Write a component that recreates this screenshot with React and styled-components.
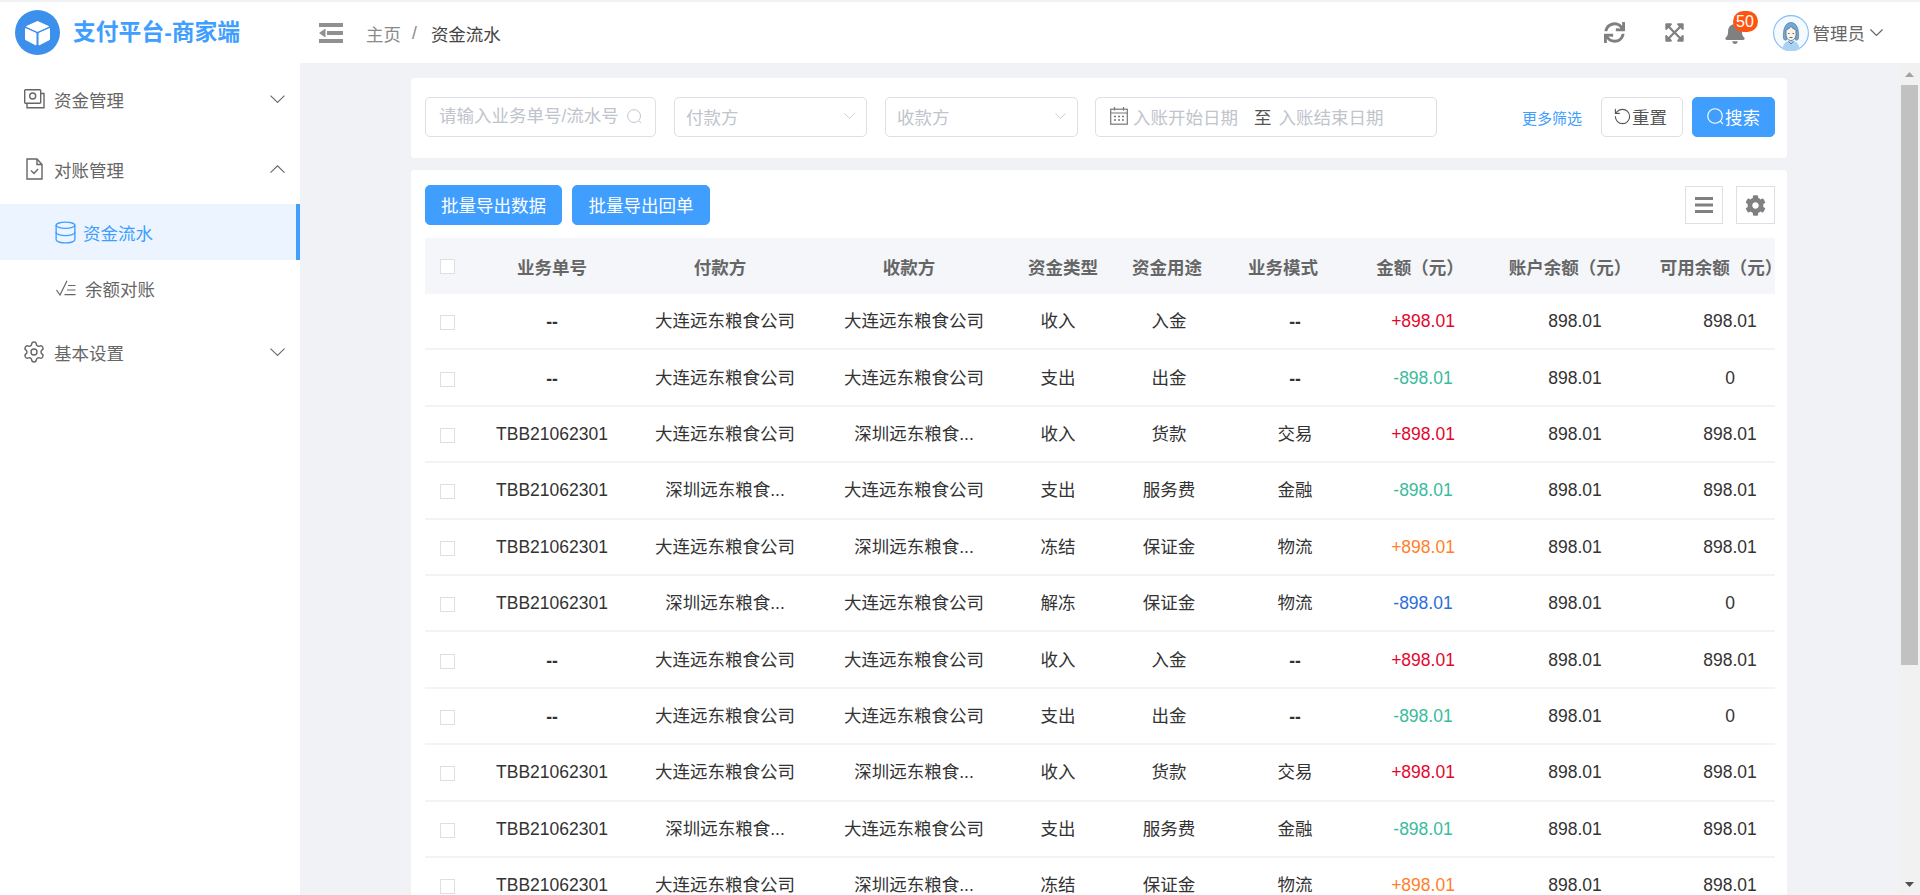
import React from 'react';
import styled, { createGlobalStyle } from 'styled-components';
import { FaSync, FaExpandArrowsAlt, FaBell, FaCog } from 'react-icons/fa';
import { Database, Settings, RotateCcw } from 'lucide-react';

const Global = createGlobalStyle`
  html, body { margin: 0; height: 100%; overflow: hidden; }
  body { font-family: "Liberation Sans", "Noto Sans CJK SC", sans-serif; font-size: 17.5px; color: #333; }
  * { box-sizing: border-box; }
`;

const Shell = styled.div`
  height: 100vh; padding-top: 2px; background: #f0f2f5;
  display: flex; flex-direction: column;
`;
const Header = styled.header`
  height: 61px; flex: none; background: #fff; display: flex; align-items: center;
`;
const Brand = styled.div`
  width: 300px; flex: none; display: flex; align-items: center; padding-left: 15px; gap: 13px;
`;
const BrandName = styled.div`
  font-size: 22.8px; font-weight: 700; color: #409eff; white-space: nowrap; margin-top: -4px;
`;
const Toggle = styled.div`
  margin-left: 19px; width: 24px; height: 20px; display: flex; color: #909090;
`;
const Crumbs = styled.nav`
  margin-left: 23px; display: flex; align-items: center; margin-top: 2px; white-space: nowrap;
`;
const CrumbLink = styled.span`color: #8a8a8a;`;
const CrumbSep = styled.span`color: #8a8a8a; margin: 0 14px 0 11px;`;
const CrumbNow = styled.span`color: #444;`;
const Tools = styled.div`
  margin-left: auto; display: flex; align-items: center; padding-right: 37px; color: #808080;
`;
const ToolIcon = styled.div`
  display: flex; margin-right: ${p => p.$gap}px; position: relative;
`;
const Badge = styled.span`
  position: absolute; left: 9px; top: -11px; height: 21px; min-width: 25px; border-radius: 11px;
  background: #ff5310; color: #fff; font-size: 16px; line-height: 21px; text-align: center;
`;
const AdminName = styled.span`color: #666; margin: 0 5px 0 4px;`;
const AdminCaret = styled.span`display: flex; color: #666;`;

const Body = styled.div`flex: 1; min-height: 0; display: flex;`;
const Sidebar = styled.aside`
  width: 300px; flex: none; background: #fff; padding-top: 1px;
`;
const MenuItem = styled.div`
  height: 70px; display: flex; align-items: center; padding-left: 24px; color: #666;
`;
const MenuIcon = styled.span`
  width: 30px; flex: none; display: flex; color: #666; transform: translateX(${p => p.$shift || 0}px);
`;
const MenuChevron = styled.span`margin-left: auto; margin-right: 15px; display: flex; color: #666;`;
const SubMenu = styled.div`margin-bottom: 1px;`;
const SubItem = styled.div`
  height: 56px; display: flex; align-items: center; padding-left: 56px;
  color: ${p => (p.$active ? '#409eff' : '#666')};
  background: ${p => (p.$active ? '#ecf5ff' : 'transparent')};
  border-right: 4px solid ${p => (p.$active ? '#409eff' : 'transparent')};
`;
const SubIcon = styled.span`
  width: ${p => p.$w}px; margin-left: ${p => p.$shift || 0}px; flex: none; display: flex;
`;

const Main = styled.main`
  flex: 1; min-width: 0; overflow: hidden; padding: 15px 0 0;
`;
const Rail = styled.div`
  width: 21px; flex: none; background: #f1f1f1; display: flex; flex-direction: column;
`;
const RailEnd = styled.div`
  height: 22px; flex: none; display: flex; align-items: center; justify-content: center;
  color: ${p => p.$c}; margin-top: ${p => (p.$bottom ? 'auto' : '0')};
`;
const Thumb = styled.div`
  height: 580px; margin: 0 2px; background: #c1c1c1;
`;
const Column = styled.div`
  width: 1376px; margin-left: 111px; display: flex; flex-direction: column; gap: 12px;
`;
const Card = styled.section`
  background: #fff; border-radius: 4px; padding: ${p => p.$pad};
`;
const FilterBar = styled.div`display: flex; align-items: center;`;
const Field = styled.div`
  height: 40px; width: ${p => p.$w}px; margin-right: ${p => p.$mr}px; flex: none;
  border: 1px solid #dcdfe6; border-radius: 5px; display: flex; align-items: center;
  padding: ${p => p.$pad || '0 11px 2px 11px'}; color: #c0c4cc; white-space: nowrap;
`;
const TextInput = styled.input`
  flex: 1; min-width: 0; border: 0; outline: 0; padding: 0; font: inherit; background: transparent; color: #333;
  &::placeholder { color: #c0c4cc; opacity: 1; }
`;
const FieldEnd = styled.span`margin-left: auto; display: flex; color: #c0c4cc;`;
const RangeSep = styled.span`color: #555; margin: 0 7px 0 16px;`;
const CalIcon = styled.span`display: flex; margin-right: 5px; color: #777;`;
const MoreLink = styled.a`
  margin-left: auto; margin-right: 19px; font-size: 15px; color: #409eff; white-space: nowrap;
`;
const Btn = styled.button`
  height: 40px; width: ${p => p.$w}px; flex: none; border-radius: 5px; font: inherit; cursor: pointer;
  padding: 0 ${p => p.$pr || 0}px 2px 0; margin-left: ${p => p.$ml || 0}px;
  display: flex; align-items: center; justify-content: center; gap: ${p => p.$gap || 0}px;
  white-space: nowrap;
  color: ${p => (p.$primary ? '#fff' : '#555')};
  background: ${p => (p.$primary ? '#409eff' : '#fff')};
  border: 1px solid ${p => (p.$primary ? '#409eff' : '#dcdfe6')};
`;
const ActionBar = styled.div`display: flex; align-items: center; gap: 10px; margin-bottom: 13px;`;
const Spacer = styled.div`flex: 1;`;
const SquareBtn = styled.button`
  width: ${p => p.$w}px; height: 38px; padding: 0; background: #fff; border: 1px solid #dcdfe6; color: #808080;
  display: flex; align-items: center; justify-content: center; margin-left: ${p => p.$ml || 0}px;
`;
const HeadRow = styled.div`
  display: grid; height: 56px; background: #f4f6fa; align-items: center;
  grid-template-columns: 44px 166px 170px 208px 100px 108px 124px 150px 150px 152px;
  font-weight: 700; color: #666; text-align: center; white-space: nowrap;
`;
const Row = styled.div`
  display: grid; height: 56.4px; align-items: center; line-height: 18px;
  grid-template-columns: 44px 166px 180px 198px 90px 132px 120px 136px 168px 142px;
  text-align: center; white-space: nowrap; border-bottom: 2px solid #f2f3f6;
`;
const Check = styled.span`
  display: block; width: 15px; height: 15px; margin: ${p => (p.$body ? '3px' : '0')} 0 0 15px;
  border: 1px solid #dcdfe6; background: #fff;
`;
const Dash = styled.span`font-weight: 700; position: relative; top: 1px;`;
const Amount = styled.span`color: ${p => p.$c};`;

const Chevron = ({ up, w = 15, sw = 1.1 }) => (
  <svg width={w} height={w * 0.55} viewBox="0 0 15 8" fill="none" stroke="currentColor" strokeWidth={sw}>
    <path d={up ? 'M.5 7.5 7.5 .7l7 6.8' : 'M.5 .5l7 6.8 7-6.8'} />
  </svg>
);
const LogoMark = () => (
  <svg width="45" height="45" viewBox="0 0 45 45">
    <circle cx="22.5" cy="22.5" r="22.5" fill="#3c8fea" />
    <path d="M22.5 11.5 33.5 16.4 22.5 21.4 11.5 16.4Z" fill="#fff" stroke="#fff" strokeLinejoin="round" strokeWidth="1" />
    <path d="M10.5 18.6 21 23.3V35L10.5 29.6Z" fill="#fff" stroke="#fff" strokeLinejoin="round" strokeWidth="1" />
    <path d="M34.5 18.6 24 23.3V35L34.5 29.6Z" fill="#fff" stroke="#fff" strokeLinejoin="round" strokeWidth="1" />
  </svg>
);
const ToggleGlyph = () => (
  <svg width="24" height="20" viewBox="0 0 24 20" fill="currentColor">
    <rect width="24" height="4" />
    <rect x="8" y="8" width="16" height="4" />
    <path d="M0 10 6.500 5.500v9Z" />
    <rect y="16" width="24" height="4" />
  </svg>
);
const AvatarGlyph = () => (
  <svg width="36" height="36" viewBox="0 0 36 36">
    <circle cx="18" cy="18" r="17.4" fill="#f5fafe" stroke="#82bff7" strokeWidth="1.1" />
    <path d="M9.5 34c.6-6 4-8.6 8.5-8.6s7.900 2.600 8.500 8.600a17 17 0 0 1-17 0Z" fill="#a9d3f5" />
    <path d="M10.500 23c-.7-8 1.500-15.500 7.500-15.500S26.200 15 25.500 23c-.2 2.500-3 3-3.500 1V15h-8v9c-.5 2-3.300 1.500-3.500-1Z" fill="#6fa9d8" stroke="#4c6f8c" strokeWidth=".6" />
    <path d="M13 15c2-1 4-2 5-3.500 1 1.500 3 2.500 5 3.500v4.500c0 3.500-2.500 6-5 6s-5-2.500-5-6Z" fill="#f7f4f0" stroke="#555" strokeWidth=".7" />
    <path d="M15 18.500h1.500M19.500 18.500H21M16.500 22.500h3" stroke="#444" strokeWidth=".8" />
    <path d="M15.500 26.500 18 29l2.500-2.500" fill="none" stroke="#555" strokeWidth=".7" />
  </svg>
);
const FundsGlyph = () => (
  <svg width="21" height="20" viewBox="0 0 21 20" fill="none" stroke="currentColor" strokeWidth="1.4">
    <rect x=".7" y=".7" width="16" height="13.500" rx="1" />
    <circle cx="8.700" cy="7" r="3" />
    <path d="M3 14.500v4.300h17V4.500h-3" />
  </svg>
);
const DocGlyph = () => (
  <svg width="17" height="22" viewBox="0 0 17 22" fill="none" stroke="currentColor" strokeWidth="1.4">
    <path d="M1 1h10l5 5.500V21H1Z" />
    <path d="M11 1v5.500h5" />
    <path d="M5 12.500l3 3 4-4.500" />
  </svg>
);
const CheckListGlyph = () => (
  <svg width="20" height="16" viewBox="0 0 20 16" fill="none" stroke="currentColor" strokeWidth="1.2">
    <path d="M.5 10l3.500 5L11 .7" />
    <path d="M12 5.500h7.500M11 10h8.500M8.500 14.700h11" />
  </svg>
);
const CalendarGlyph = () => (
  <svg width="18" height="18" viewBox="0 0 18 18" fill="none" stroke="currentColor" strokeWidth="1.2">
    <rect x=".7" y="2.200" width="16.600" height="15" />
    <path d="M.7 6h16.600M4.500 0v3.500M13.500 0v3.500" />
    <path d="M4 9.500h2M8 9.500h2M12 9.500h2M4 13h2M8 13h2M12 13h2" strokeWidth="1.400" />
  </svg>
);
const BarsGlyph = () => (
  <svg width="18" height="16" viewBox="0 0 18 16" fill="currentColor">
    <rect width="18" height="3" />
    <rect y="6.500" width="18" height="3" />
    <rect y="13" width="18" height="3" />
  </svg>
);
const Lens = ({ size = 18, sw = 1.2 }) => (
  <svg width={size} height={size} viewBox="0 0 18 18" fill="none" stroke="currentColor" strokeWidth={sw}>
    <circle cx="8.500" cy="8.500" r="7.700" />
    <path d="M14 14l3 3" />
  </svg>
);
const RailArrow = ({ down }) => (
  <svg width="9" height="5" viewBox="0 0 9 5" fill="currentColor">
    <path d={down ? 'M0 0h9L4.500 5Z' : 'M0 5h9L4.500 0Z'} />
  </svg>
);

const RED = '#e4062e', GREEN = '#3abb9e', ORANGE = '#ff7f2a', BLUE = '#2a6edc';
const DL = '大连远东粮食公司', SZ = '深圳远东粮食...', TBB = 'TBB21062301';
const base = [
  ['--', DL, DL, '收入', '入金', '--', '+898.01', RED, '898.01'],
  ['--', DL, DL, '支出', '出金', '--', '-898.01', GREEN, '0'],
  [TBB, DL, SZ, '收入', '货款', '交易', '+898.01', RED, '898.01'],
  [TBB, SZ, DL, '支出', '服务费', '金融', '-898.01', GREEN, '898.01'],
  [TBB, DL, SZ, '冻结', '保证金', '物流', '+898.01', ORANGE, '898.01'],
  [TBB, SZ, DL, '解冻', '保证金', '物流', '-898.01', BLUE, '0'],
];
const rows = Array.from({ length: 11 }, (_, i) => base[i % 6]);
const heads = ['业务单号', '付款方', '收款方', '资金类型', '资金用途', '业务模式', '金额（元）', '账户余额（元）', '可用余额（元）'];
const cell = v => (v === '--' ? <Dash>--</Dash> : v);

export default function App() {
  return (
    <Shell>
      <Global />
      <Header>
        <Brand>
          <LogoMark />
          <BrandName>支付平台-商家端</BrandName>
        </Brand>
        <Toggle><ToggleGlyph /></Toggle>
        <Crumbs>
          <CrumbLink>主页</CrumbLink>
          <CrumbSep>/</CrumbSep>
          <CrumbNow>资金流水</CrumbNow>
        </Crumbs>
        <Tools>
          <ToolIcon $gap={39}><FaSync size={21} /></ToolIcon>
          <ToolIcon $gap={39}><FaExpandArrowsAlt size={21} /></ToolIcon>
          <ToolIcon $gap={27}><FaBell size={22} /><Badge>50</Badge></ToolIcon>
          <AvatarGlyph />
          <AdminName>管理员</AdminName>
          <AdminCaret><Chevron w={13} sw={1.4} /></AdminCaret>
        </Tools>
      </Header>
      <Body>
        <Sidebar>
          <MenuItem>
            <MenuIcon><FundsGlyph /></MenuIcon>资金管理
            <MenuChevron><Chevron /></MenuChevron>
          </MenuItem>
          <MenuItem>
            <MenuIcon $shift={2}><DocGlyph /></MenuIcon>对账管理
            <MenuChevron><Chevron up /></MenuChevron>
          </MenuItem>
          <SubMenu>
            <SubItem $active>
              <SubIcon $w={30} $shift={-3}><Database size={25} strokeWidth={1.3} /></SubIcon>资金流水
            </SubItem>
            <SubItem>
              <SubIcon $w={29}><CheckListGlyph /></SubIcon>余额对账
            </SubItem>
          </SubMenu>
          <MenuItem>
            <MenuIcon $shift={-2}><Settings size={24} strokeWidth={1.4} /></MenuIcon>基本设置
            <MenuChevron><Chevron /></MenuChevron>
          </MenuItem>
        </Sidebar>
        <Main>
          <Column>
            <Card $pad="19px 12px 21px 14px">
              <FilterBar>
                <Field $w={231} $mr={18} $pad="0 13px 2px 13px">
                  <TextInput placeholder="请输入业务单号/流水号" />
                  <FieldEnd><Lens size={15} /></FieldEnd>
                </Field>
                <Field $w={193} $mr={18}>付款方<FieldEnd><Chevron w={11} /></FieldEnd></Field>
                <Field $w={193} $mr={17}>收款方<FieldEnd><Chevron w={11} /></FieldEnd></Field>
                <Field $w={342} $mr={0} $pad="0 14px 2px">
                  <CalIcon><CalendarGlyph /></CalIcon>
                  入账开始日期
                  <RangeSep>至</RangeSep>
                  入账结束日期
                </Field>
                <MoreLink>更多筛选</MoreLink>
                <Btn $w={82} $pr={4}><RotateCcw size={19} strokeWidth={1.4} />重置</Btn>
                <Btn $w={83} $primary $gap={1} $ml={9}><Lens size={17} />搜索</Btn>
              </FilterBar>
            </Card>
            <Card $pad="15px 12px 0 14px">
              <ActionBar>
                <Btn $w={137} $primary>批量导出数据</Btn>
                <Btn $w={138} $primary>批量导出回单</Btn>
                <Spacer />
                <SquareBtn $w={38}><BarsGlyph /></SquareBtn>
                <SquareBtn $w={39} $ml={3}><FaCog size={21} /></SquareBtn>
              </ActionBar>
              <HeadRow>
                <Check />
                {heads.map(h => <div key={h}>{h}</div>)}
              </HeadRow>
              {rows.map((r, i) => (
                <Row key={i}>
                  <Check $body />
                  <div>{cell(r[0])}</div>
                  <div>{r[1]}</div>
                  <div>{r[2]}</div>
                  <div>{r[3]}</div>
                  <div>{r[4]}</div>
                  <div>{cell(r[5])}</div>
                  <div><Amount $c={r[7]}>{r[6]}</Amount></div>
                  <div>898.01</div>
                  <div>{r[8]}</div>
                </Row>
              ))}
            </Card>
          </Column>
        </Main>
        <Rail>
          <RailEnd $c="#a3a3a3"><RailArrow /></RailEnd>
          <Thumb />
          <RailEnd $c="#505050" $bottom><RailArrow down /></RailEnd>
        </Rail>
      </Body>
    </Shell>
  );
}
